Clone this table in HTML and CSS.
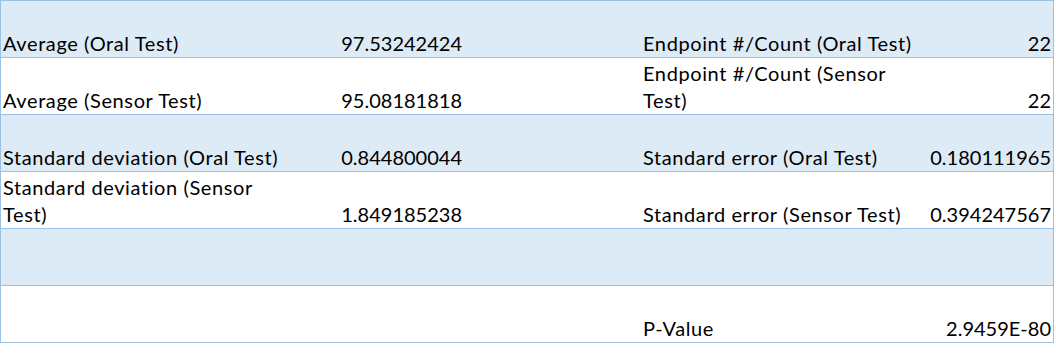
FILE: index.html
```html
<!DOCTYPE html>
<html>
<head>
<meta charset="utf-8">
<link rel="stylesheet" href="styles.css">
</head>
<body>
<div class="sheet">
  <div class="row blue">
    <div class="cell">Average (Oral Test)</div>
    <div class="cell num">97.53242424</div>
    <div class="cell"></div>
    <div class="cell">Endpoint #/Count (Oral Test)</div>
    <div class="cell num">22</div>
  </div>
  <div class="row">
    <div class="cell">Average (Sensor Test)</div>
    <div class="cell num">95.08181818</div>
    <div class="cell"></div>
    <div class="cell">Endpoint #/Count (Sensor<br>Test)</div>
    <div class="cell num">22</div>
  </div>
  <div class="row blue">
    <div class="cell">Standard deviation (Oral Test)</div>
    <div class="cell num">0.844800044</div>
    <div class="cell"></div>
    <div class="cell">Standard error (Oral Test)</div>
    <div class="cell num">0.180111965</div>
  </div>
  <div class="row">
    <div class="cell">Standard deviation (Sensor<br>Test)</div>
    <div class="cell num">1.849185238</div>
    <div class="cell"></div>
    <div class="cell">Standard error (Sensor Test)</div>
    <div class="cell num">0.394247567</div>
  </div>
  <div class="row blue">
    <div class="cell"></div>
    <div class="cell num"></div>
    <div class="cell"></div>
    <div class="cell"></div>
    <div class="cell num"></div>
  </div>
  <div class="row">
    <div class="cell"></div>
    <div class="cell num"></div>
    <div class="cell"></div>
    <div class="cell">P-Value</div>
    <div class="cell num">2.9459E-80</div>
  </div>
</div>
</body>
</html>
```
FILE: styles.css
```css
html, body {
  margin: 0;
  padding: 0;
  background: #ffffff;
}
.sheet {
  width: 1052px;
  border: 1px solid #9bc2e6;
  border-bottom: none;
  font-family: Lato, "Liberation Sans", sans-serif;
  font-size: 20px;
  line-height: 27px;
  color: #000000;
}
.row {
  display: grid;
  grid-template-columns: 290px 173px 177px 283px 1fr;
  height: 56px;
  border-bottom: 1px solid #9bc2e6;
}
.row.blue {
  background: #ddebf7;
}
.cell {
  display: flex;
  align-items: flex-end;
  padding: 0 2px;
  white-space: nowrap;
  letter-spacing: 0.6px;
}
.cell.num {
  justify-content: flex-end;
  letter-spacing: 0;
}
```
